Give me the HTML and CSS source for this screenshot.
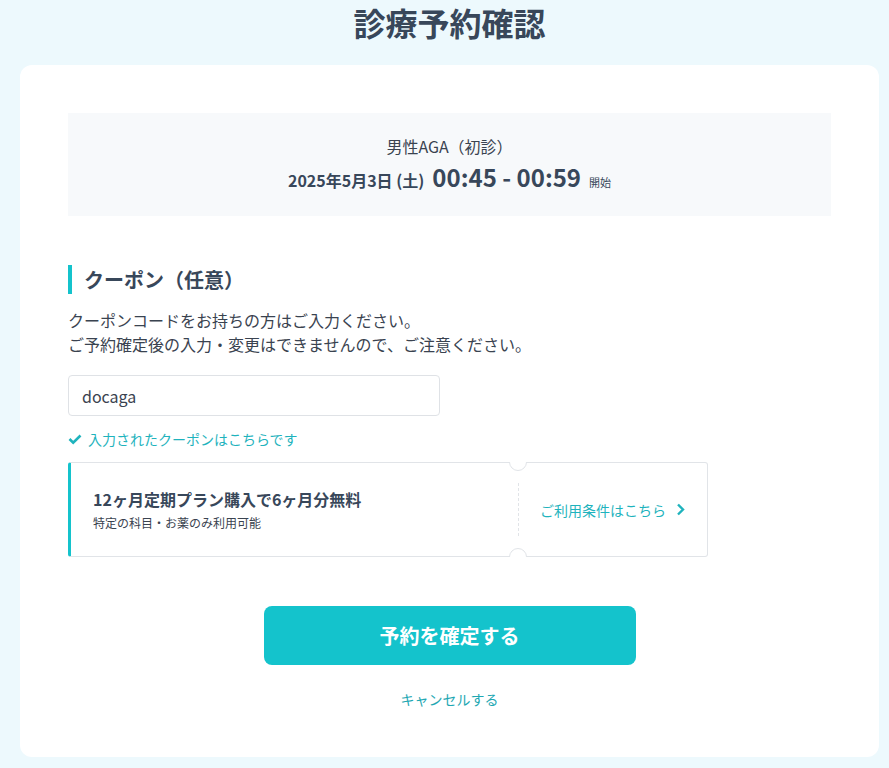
FILE: index.html
```html
<!DOCTYPE html>
<html>
<head lang="ja">
    <meta charset="UTF-8">
    <title>診療予約確認</title>
    <link rel="stylesheet" href="styles.css">
</head>
<body>
<h1 class="pageTitle">診療予約確認</h1>
<div class="card">
    <div class="summary">
        <p class="menuName">男性AGA（初診）</p>
        <p class="dateLine">
            <span class="date">2025年5月3日 (土)</span>
            <span class="time">00:45 - 00:59</span>
            <span class="start">開始</span>
        </p>
    </div>

    <h2 class="sectionTitle">クーポン（任意）</h2>
    <p class="note">クーポンコードをお持ちの方はご入力ください。<br>ご予約確定後の入力・変更はできませんので、ご注意ください。</p>

    <input class="couponInput" type="text" value="docaga">
    <p class="okMsg">
        <svg width="14" height="11" viewBox="0 0 14 11"><path d="M1.5 5 L5.2 8.7 L12.5 1.5" fill="none" stroke="#1fb3bd" stroke-width="2.6"/></svg>
        入力されたクーポンはこちらです
    </p>

    <div class="coupon">
        <div class="couponMain">
            <p class="couponName">12ヶ月定期プラン購入で6ヶ月分無料</p>
            <p class="couponSub">特定の科目・お薬のみ利用可能</p>
        </div>
        <div class="couponSide">
            <a class="terms" href="#">ご利用条件はこちら
                <svg width="9" height="13" viewBox="0 0 9 13"><path d="M2 1.5 L7 6.5 L2 11.5" fill="none" stroke="#1fb3bd" stroke-width="2.4"/></svg>
            </a>
        </div>
        <svg class="notch notchTop" width="18" height="10" viewBox="0 0 18 10"><path d="M0.5 0 A8.5 8.5 0 0 0 17.5 0" fill="#fff" stroke="#e1e4e8"/></svg>
        <svg class="notch notchBottom" width="18" height="10" viewBox="0 0 18 10"><path d="M0.5 10 A8.5 8.5 0 0 1 17.5 10" fill="#fff" stroke="#e1e4e8"/></svg>
    </div>

    <div class="actions">
        <button class="submitBtn">予約を確定する</button>
        <a class="cancel" href="#">キャンセルする</a>
    </div>
</div>
</body>
</html>
```
FILE: styles.css
```css
*{
    margin: 0;
    padding: 0;
    box-sizing: border-box;
}
body{
    background: #edf9fd;
    font-family: "Noto Sans CJK JP", "Noto Sans", sans-serif;
    color: #3a4350;
}
a{
    text-decoration: none;
}
.pageTitle{
    margin: 0 10px 21px 20px;
    font-size: 32px;
    line-height: 44px;
    font-weight: 700;
    text-align: center;
    color: #38475a;
}
.card{
    margin: 0 10px 0 20px;
    background: #fff;
    border-radius: 12px;
    padding: 48px 48px 48px;
}
.summary{
    background: #f7f9fb;
    text-align: center;
    padding: 22px 0 22px;
}
.menuName{
    font-size: 16px;
    line-height: 22px;
}
.dateLine{
    margin-top: 3px;
    height: 34px;
    display: flex;
    justify-content: center;
    align-items: baseline;
    color: #38475a;
}
.date{
    font-size: 16px;
    font-weight: 700;
    line-height: 34px;
}
.time{
    font-size: 24px;
    font-weight: 700;
    line-height: 34px;
    margin-left: 8px;
}
.start{
    font-size: 11px;
    line-height: 34px;
    margin-left: 8px;
}
.sectionTitle{
    margin-top: 49px;
    font-size: 20px;
    line-height: 29px;
    font-weight: 700;
    border-left: 4px solid #14c3cc;
    padding-left: 12px;
    color: #38475a;
}
.note{
    margin-top: 14px;
    font-size: 16px;
    line-height: 24px;
}
.couponInput{
    display: block;
    margin-top: 19px;
    width: 372px;
    height: 41px;
    border: 1px solid #dfe2e6;
    border-radius: 4px;
    padding: 0 13px;
    font-family: "Noto Sans CJK JP", "Noto Sans", sans-serif;
    font-size: 16px;
    color: #3a4350;
}
.okMsg{
    margin-top: 13px;
    font-size: 14px;
    line-height: 20px;
    color: #1fb3bd;
    display: flex;
    align-items: center;
    gap: 6px;
}
.coupon{
    position: relative;
    margin-top: 13px;
    width: 640px;
    height: 95px;
    display: flex;
    border: 1px solid #e1e4e8;
    border-left: 3px solid #14c3cc;
    border-radius: 3px;
}
.couponMain{
    width: 447px;
    padding-left: 22px;
    display: flex;
    flex-direction: column;
    justify-content: center;
}
.couponName{
    font-size: 16px;
    line-height: 24px;
    font-weight: 700;
    color: #38475a;
}
.couponSub{
    margin-top: 3px;
    font-size: 12px;
    line-height: 18px;
}
.couponSide{
    flex: 1;
    margin: 20px 0;
    border-left: 1px dashed #e1e4e8;
    display: flex;
    align-items: center;
    padding-left: 21px;
}
.terms{
    font-size: 14px;
    color: #1fb3bd;
    display: flex;
    align-items: center;
    gap: 10px;
}
.notch{
    position: absolute;
    left: 438px;
}
.notchTop{
    top: -1px;
}
.notchBottom{
    bottom: -1px;
}
.actions{
    margin-top: 49px;
    display: flex;
    flex-direction: column;
    align-items: center;
}
.submitBtn{
    width: 372px;
    height: 59px;
    border: none;
    border-radius: 8px;
    background: #14c3cc;
    color: #fff;
    font-family: "Noto Sans CJK JP", "Noto Sans", sans-serif;
    font-size: 20px;
    font-weight: 700;
}
.cancel{
    margin-top: 24px;
    font-size: 14px;
    line-height: 20px;
    color: #1fa8b3;
}
```
